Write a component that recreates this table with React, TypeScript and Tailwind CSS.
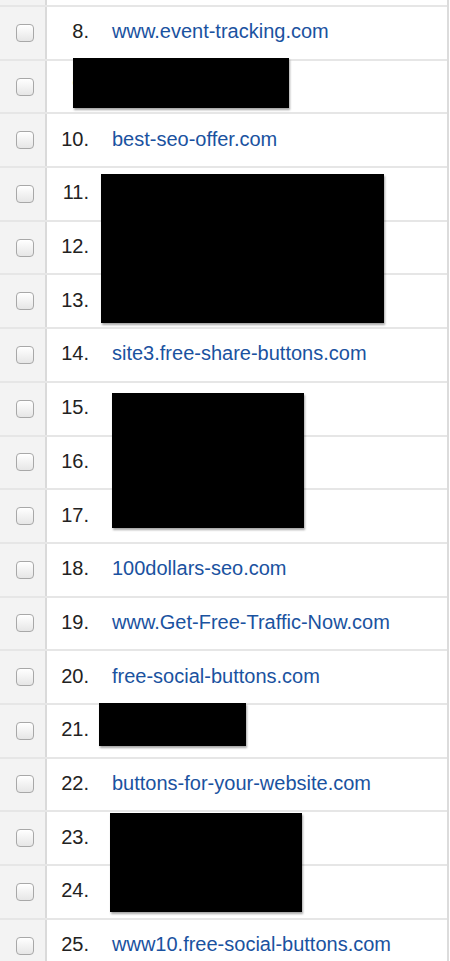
import React from "react";

const rows: { n: number; text: string }[] = [
  { n: 8, text: "www.event-tracking.com" },
  { n: 9, text: "" },
  { n: 10, text: "best-seo-offer.com" },
  { n: 11, text: "" },
  { n: 12, text: "" },
  { n: 13, text: "" },
  { n: 14, text: "site3.free-share-buttons.com" },
  { n: 15, text: "" },
  { n: 16, text: "" },
  { n: 17, text: "" },
  { n: 18, text: "100dollars-seo.com" },
  { n: 19, text: "www.Get-Free-Traffic-Now.com" },
  { n: 20, text: "free-social-buttons.com" },
  { n: 21, text: "" },
  { n: 22, text: "buttons-for-your-website.com" },
  { n: 23, text: "" },
  { n: 24, text: "" },
  { n: 25, text: "www10.free-social-buttons.com" },
];

const boxes = [
  { left: 73, top: 58, w: 216, h: 50 },
  { left: 101, top: 174, w: 283, h: 149 },
  { left: 112, top: 393, w: 192, h: 135 },
  { left: 99, top: 703, w: 147, h: 43 },
  { left: 110, top: 813, w: 192, h: 99 },
];

function Checkbox() {
  return (
    <div className="w-[18px] h-[18px] rounded-[4px] border border-[#a8a8a8] bg-gradient-to-b from-white to-[#e6e6e6] shadow-[inset_0_1px_0_#fff]" />
  );
}

export default function App() {
  return (
    <div
      className="relative w-[450px] h-[961px] overflow-hidden bg-white"
      style={{ fontFamily: '"Liberation Sans", Arial, sans-serif' }}
    >
      <div className="w-[449px] border-r-2 border-[#dcdcdc]">
        <div className="flex h-[5px]">
          <div className="w-[47px] shrink-0 bg-[#f3f3f3] border-r-2 border-[#dadada]" />
          <div className="flex-1" />
        </div>
        {rows.map((r) => (
          <div key={r.n} className="flex h-[53.7px] border-t-2 border-[#e6e6e6]">
            <div className="w-[47px] shrink-0 bg-[#f3f3f3] border-r-2 border-[#dadada] flex items-center justify-end pr-[11px]">
              <Checkbox />
            </div>
            <div className="flex-1 flex items-center pb-[3px] text-[20px] leading-none">
              <span className="w-[42px] text-right text-[#222]">{r.n}.</span>
              <span className="ml-[23px] text-[#1a52a0] whitespace-nowrap">{r.text}</span>
            </div>
          </div>
        ))}
      </div>
      {boxes.map((b, i) => (
        <div
          key={i}
          className="absolute bg-black shadow-[1px_2px_2px_rgba(0,0,0,0.35)]"
          style={{ left: b.left, top: b.top, width: b.w, height: b.h }}
        />
      ))}
    </div>
  );
}
